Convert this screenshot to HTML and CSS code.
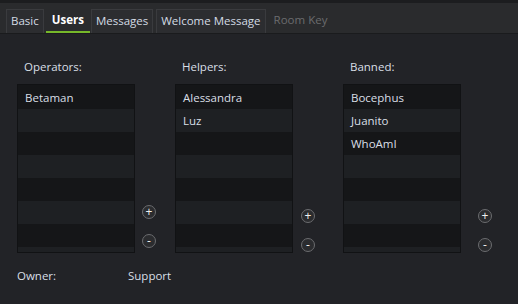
FILE: index.html
```html
<!DOCTYPE html>
<html>
<head>
<meta charset="utf-8">
<link rel="stylesheet" href="styles.css">
</head>
<body>
<div class="tabbar">
  <div class="tab">Basic</div>
  <div class="tab active">Users</div>
  <div class="tab">Messages</div>
  <div class="tab">Welcome Message</div>
  <div class="tab disabled">Room Key</div>
</div>
<div class="content">
  <div class="columns">
    <div class="col col-ops">
      <div class="label">Operators:</div>
      <div class="row">
        <div class="list">
          <div class="item">Betaman</div><div class="item"></div><div class="item"></div><div class="item"></div><div class="item"></div><div class="item"></div><div class="item"></div><div class="item"></div>
        </div>
        <div class="btns btns-low">
          <div class="cbtn">+</div>
          <div class="cbtn">-</div>
        </div>
      </div>
    </div>
    <div class="col col-help">
      <div class="label">Helpers:</div>
      <div class="row">
        <div class="list">
          <div class="item">Alessandra</div><div class="item">Luz</div><div class="item"></div><div class="item"></div><div class="item"></div><div class="item"></div><div class="item"></div><div class="item"></div>
        </div>
        <div class="btns">
          <div class="cbtn">+</div>
          <div class="cbtn">-</div>
        </div>
      </div>
    </div>
    <div class="col col-ban">
      <div class="label">Banned:</div>
      <div class="row">
        <div class="list">
          <div class="item">Bocephus</div><div class="item">Juanito</div><div class="item">WhoAmI</div><div class="item"></div><div class="item"></div><div class="item"></div><div class="item"></div><div class="item"></div>
        </div>
        <div class="btns btns-far">
          <div class="cbtn">+</div>
          <div class="cbtn">-</div>
        </div>
      </div>
    </div>
  </div>
  <div class="owner">
    <span class="owner-label">Owner:</span>
    <span class="owner-value">Support</span>
  </div>
</div>
</body>
</html>
```
FILE: styles.css
```css
* { box-sizing: border-box; }
html, body {
  margin: 0;
  padding: 0;
  width: 518px;
  height: 304px;
  overflow: hidden;
  background: #222327;
  font-family: "Open Sans", "Noto Sans", sans-serif;
  font-size: 11.5px;
  color: #d9dfe6;
}
.tabbar {
  height: 34px;
  background: #2a2b2d;
  border-top: 3px solid #1c1d1f;
  border-bottom: 1px solid #1a1b1d;
  display: flex;
  align-items: flex-end;
  padding-left: 6px;
}
.tab {
  height: 24px;
  padding: 0 4px;
  line-height: 22px;
  border: 1px solid #3a3b3e;
  border-bottom: none;
  background: #2c2d30;
  color: #d3dbe4;
  white-space: nowrap;
  margin-right: 1px;
}
.tab.active {
  border: none;
  background: transparent;
  color: #ffffff;
  font-weight: 700;
  padding: 0 6px;
  line-height: 21px;
  border-bottom: 2px solid #76b82a;
  margin: 0 1px 0 1px;
}
.tab.disabled {
  border: none;
  background: transparent;
  color: #6a6b6e;
  margin-left: 3px;
}
.tab:nth-child(3) { margin-right: 3px; }
.content {
  padding: 24px 0 0 17px;
}
.columns {
  display: flex;
}
.col-ops { width: 158px; }
.col-help { width: 168px; }
.label {
  padding-left: 7px;
  height: 18px;
  line-height: 18px;
  margin-bottom: 8px;
}
.row {
  display: flex;
}
.list {
  width: 118px;
  height: 169px;
  border: 1px solid #111214;
  background: #151618;
  overflow: hidden;
}
.item {
  height: 23px;
  line-height: 23px;
  padding-left: 7px;
  background: #151618;
}
.item:nth-child(even) {
  background: #1e2023;
}
.item:first-child { height: 24px; line-height: 25px; }
.btns {
  display: flex;
  flex-direction: column;
  gap: 15px;
  margin-left: 8px;
  padding-top: 125px;
}
.btns-low { padding-top: 121px; margin-left: 7px; }
.btns-far { margin-left: 17px; }
.cbtn {
  width: 14px;
  height: 14px;
  border-radius: 50%;
  border: 1px solid #6b6c6f;
  background: #2b2c2f;
  color: #f0f0f0;
  font-size: 12px;
  line-height: 11px;
  text-align: center;
  font-weight: 400;
}
.owner {
  display: flex;
  margin-top: 14px;
  height: 18px;
  line-height: 18px;
}
.owner-label { width: 111px; }
```
